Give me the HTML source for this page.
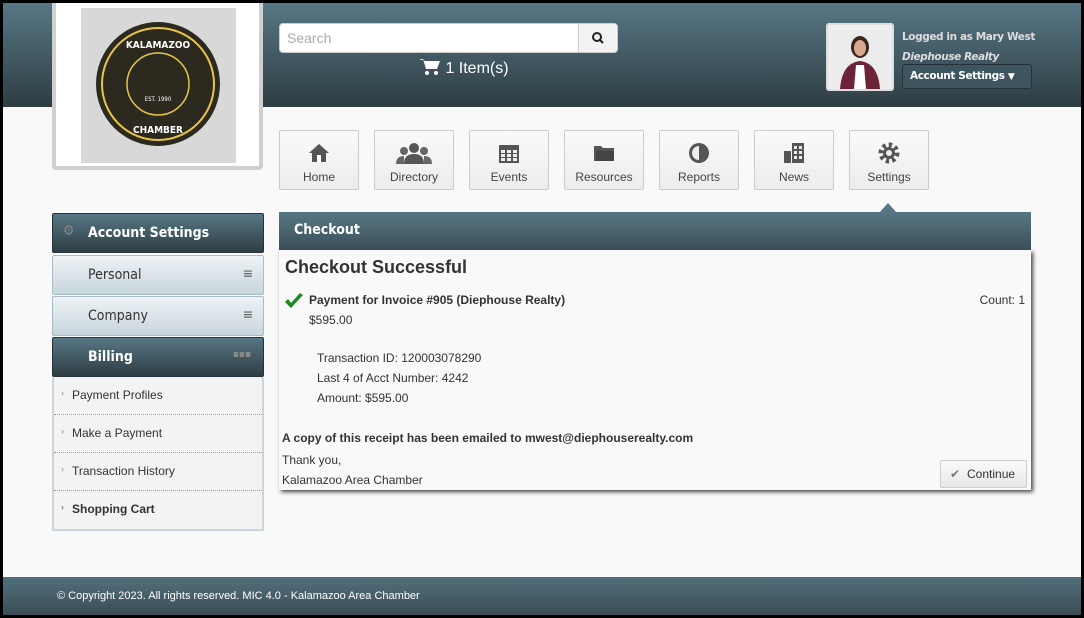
<!DOCTYPE html>
<html><head><meta charset="utf-8"><style>
*{box-sizing:border-box;margin:0;padding:0}
body{width:1084px;height:618px;background:#000;font-family:"Liberation Sans",sans-serif;overflow:hidden;position:relative}
.page{position:absolute;left:3px;top:3px;width:1078px;height:612px;background:#f9f9f9;overflow:hidden}
.hdr{position:absolute;left:0;top:0;width:1078px;height:104px;background:linear-gradient(#577784,#2e3d44)}
.logo{position:absolute;left:49px;top:0;width:211px;height:167px;background:#fff;border:4px solid #d0d0d0;border-top:none;border-radius:0 0 4px 4px}
.logo .img{position:absolute;left:25px;top:5px;width:155px;height:155px;background:#d8d8d8}
.search{position:absolute;left:276px;top:20px;width:339px;height:30px;background:#fff;border-radius:4px;border:1px solid #ccc}
.search span{position:absolute;left:7px;top:6px;color:#aaa;font-size:14px}
.search .btn{position:absolute;right:0;top:0;width:39px;height:28px;background:#f3f3f3;border-left:1px solid #ccc;border-radius:0 4px 4px 0}
.cart{position:absolute;left:416px;top:54px;color:#fff;font-size:16px}
.avatar{position:absolute;left:823px;top:20px;width:68px;height:68px;background:#eee;border:2px solid #ddd;border-radius:3px}
.user{position:absolute;left:899px;top:24px;font-family:"DejaVu Sans",sans-serif;font-weight:bold;font-size:10.5px;line-height:20px;color:#ddd;letter-spacing:-.4px;white-space:nowrap}
.acct{position:absolute;left:899px;top:61px;width:130px;height:25px;background:#3e5560;border:1px solid #263238;border-radius:3px;color:#fff;font-family:"DejaVu Sans",sans-serif;font-weight:bold;font-size:10.5px;padding:5px 7px;letter-spacing:-.4px;white-space:nowrap}
.nav{position:absolute;top:127px;width:80px;height:60px;background:linear-gradient(#fafafa,#ececec);border:1px solid #ccc;border-radius:2px;text-align:center;font-size:12px;color:#444}
.nav svg{display:block;margin:11px auto 6px;}
.side{position:absolute;left:49px;width:212px}
.sh{height:40px;background:linear-gradient(#577784,#2e3d44);color:#fff;font-family:"DejaVu Sans Condensed","DejaVu Sans",sans-serif;font-size:14px;padding:11px 0 0 35px;border:1px solid #263238;border-radius:2px}
.sl{height:40px;background:linear-gradient(#eef3f6,#c7d5dc);color:#333;font-family:"DejaVu Sans Condensed","DejaVu Sans",sans-serif;font-size:14px;padding:11px 0 0 35px;border:1px solid #a9bcc6;border-radius:2px;position:relative}
.items{background:#f3f3f3;border:2px solid #cad6dd;border-top:none}
.it{height:38px;border-bottom:1px dotted #999;font-size:12px;color:#333;padding:11px 0 0 18px;position:relative}
.it:before{content:"›";position:absolute;left:7px;top:11px;font-size:9px;color:#888}
.ch{position:absolute;left:276px;top:209px;width:752px;height:38px;background:linear-gradient(#577784,#3b4f58);color:#fff;font-family:"DejaVu Sans Condensed","DejaVu Sans",sans-serif;font-size:14px;font-weight:bold;padding:10px 15px}
.panel{position:absolute;left:276px;top:247px;width:752px;height:240px;background:#f9f9f9;box-shadow:2px 2px 4px #444;font-size:12px;color:#333}
.panel p{position:absolute}
.cont{position:absolute;right:4px;top:210px;width:87px;height:28px;border:1px solid #ccc;background:linear-gradient(#fafafa,#e8e8e8);border-radius:2px;padding:6px 0 0 26px;font-size:12px}
.foot{position:absolute;left:0;top:574px;width:1078px;height:38px;background:linear-gradient(#53707c,#3a4d56);color:#fff;font-size:11px;padding:13px 0 0 54px}
</style></head><body><div class="page">
<div class="hdr"></div>
<div class="logo"><div class="img">
<svg width="155" height="155" viewBox="0 0 155 155"><circle cx="77" cy="76" r="62" fill="#2c2a1f"/><circle cx="77" cy="76" r="56" fill="none" stroke="#e8c54a" stroke-width="2"/><circle cx="77" cy="76" r="31" fill="none" stroke="#e8c54a" stroke-width="1.5"/>
<text x="77" y="40" font-size="10" fill="#fff" text-anchor="middle" font-family="DejaVu Sans Condensed" font-weight="bold">KALAMAZOO</text>
<text x="77" y="93" font-size="6" fill="#fff" text-anchor="middle" font-family="DejaVu Sans Condensed">EST. 1990</text>
<text x="77" y="125" font-size="10" fill="#fff" text-anchor="middle" font-family="DejaVu Sans Condensed" font-weight="bold">CHAMBER</text></svg></div></div>
<div class="search"><span>Search</span><div class="btn"><svg width="39" height="28"><circle cx="18" cy="13" r="4" fill="none" stroke="#222" stroke-width="2"/><line x1="21" y1="16" x2="24" y2="19" stroke="#222" stroke-width="2"/></svg></div></div>
<div class="cart"><svg width="22" height="18" style="vertical-align:-2px"><path d="M0 2h4l3 10h11l3-8H6" fill="#fff"/><circle cx="8" cy="16" r="2" fill="#fff"/><circle cx="17" cy="16" r="2" fill="#fff"/></svg> 1 Item(s)</div>
<div class="avatar"><svg width="64" height="64"><rect x="4" y="4" width="56" height="60" fill="#ececec"/><ellipse cx="32" cy="22" rx="9" ry="11" fill="#3a2620"/><ellipse cx="32" cy="23" rx="6" ry="8" fill="#d9a98e"/><path d="M12 64 Q14 38 32 36 Q50 38 52 64Z" fill="#6e2438"/><path d="M26 64 L28 40 L36 40 L38 64Z" fill="#fff"/></svg></div>
<div class="user">Logged in as Mary West<br><i>Diephouse Realty</i></div>
<div class="acct">Account Settings <span style="font-size:9px">▼</span></div>

<div class="nav" style="left:276px"><svg width="22" height="22"><path d="M11 2 L21 11 H18 V20 H4 V11 H1Z" fill="#555"/><rect x="9" y="13" width="4" height="7" fill="#fff"/></svg>Home</div>
<div class="nav" style="left:371px"><svg width="36" height="22"><circle cx="18" cy="6" r="5" fill="#555"/><path d="M8 22 Q8 12 18 12 Q28 12 28 22Z" fill="#555"/><circle cx="8" cy="9" r="4" fill="#666"/><circle cx="28" cy="9" r="4" fill="#666"/><path d="M0 22 Q0 14 8 14 L8 22Z M36 22 Q36 14 28 14 L28 22Z" fill="#666"/></svg>Directory</div>
<div class="nav" style="left:466px"><svg width="22" height="22"><rect x="1" y="3" width="20" height="18" fill="#555"/><g fill="#eee"><rect x="3" y="8" width="4" height="3"/><rect x="9" y="8" width="4" height="3"/><rect x="15" y="8" width="4" height="3"/><rect x="3" y="12" width="4" height="3"/><rect x="9" y="12" width="4" height="3"/><rect x="15" y="12" width="4" height="3"/><rect x="3" y="16" width="4" height="3"/><rect x="9" y="16" width="4" height="3"/><rect x="15" y="16" width="4" height="3"/></g></svg>Events</div>
<div class="nav" style="left:561px"><svg width="22" height="22"><path d="M1 4 H8 L10 6 H21 V19 H1Z" fill="#555"/><rect x="3" y="9" width="18" height="10" fill="#444"/></svg>Resources</div>
<div class="nav" style="left:656px"><svg width="22" height="22"><circle cx="11" cy="11" r="10" fill="#555"/><path d="M11 4 A7 7 0 0 0 11 18Z" fill="#eee"/></svg>Reports</div>
<div class="nav" style="left:751px"><svg width="22" height="22"><rect x="9" y="1" width="12" height="20" fill="#555"/><rect x="1" y="9" width="7" height="12" fill="#555"/><g fill="#eee"><rect x="11" y="4" width="3" height="3"/><rect x="16" y="4" width="3" height="3"/><rect x="11" y="9" width="3" height="3"/><rect x="16" y="9" width="3" height="3"/><rect x="11" y="14" width="3" height="3"/><rect x="16" y="14" width="3" height="3"/></g></svg>News</div>
<div class="nav" style="left:846px"><svg width="22" height="22"><circle cx="11" cy="11" r="8" fill="none" stroke="#555" stroke-width="5" stroke-dasharray="3.2 3"/><circle cx="11" cy="11" r="6" fill="#555"/><circle cx="11" cy="11" r="3" fill="#eee"/></svg>Settings</div>
<svg style="position:absolute;left:876px;top:199px" width="18" height="11"><path d="M0 11 L9 1 L18 11Z" fill="#577784"/></svg>

<div class="side" style="top:210px">
<div class="sh" style="position:relative;font-weight:bold"><span style="position:absolute;left:10px;top:9px;color:#888;font-weight:normal">⚙</span>Account Settings</div>
<div class="sl" style="margin-top:2px">Personal<span style="position:absolute;right:10px;top:10px;color:#666">≡</span></div>
<div class="sl" style="margin-top:1px">Company<span style="position:absolute;right:10px;top:10px;color:#666">≡</span></div>
<div class="sh" style="margin-top:1px;position:relative;font-weight:bold">Billing<span style="position:absolute;right:12px;top:11px;color:#888;font-size:10px;font-weight:normal">▪▪▪</span></div>
<div class="items"><div class="it">Payment Profiles</div><div class="it">Make a Payment</div><div class="it">Transaction History</div><div class="it" style="font-weight:bold;border-bottom:none">Shopping Cart</div></div>
</div>

<div class="ch">Checkout</div>
<div class="panel">
<p style="left:6px;top:7px;font-size:18px;font-weight:bold">Checkout Successful</p>
<svg style="position:absolute;left:5px;top:43px" width="20" height="16"><path d="M1 9 L7 15 L19 2 L16 0 L7 10 L4 6Z" fill="#1e8a1e"/></svg>
<p style="left:30px;top:43px;font-weight:bold">Payment for Invoice #905 (Diephouse Realty)</p>
<p style="right:6px;top:43px">Count: 1</p>
<p style="left:30px;top:63px">$595.00</p>
<p style="left:38px;top:98px;line-height:20px">Transaction ID: 120003078290<br>Last 4 of Acct Number: 4242<br>Amount: $595.00</p>
<p style="left:3px;top:181px;font-weight:bold">A copy of this receipt has been emailed to mwest@diephouserealty.com</p>
<p style="left:3px;top:200px;line-height:20px">Thank you,<br>Kalamazoo Area Chamber</p>
<div class="cont"><span style="position:absolute;left:9px;top:6px;color:#777">✔</span>Continue</div>
</div>
<div class="foot">© Copyright 2023. All rights reserved. MIC 4.0 - Kalamazoo Area Chamber</div>
</div></body></html>
